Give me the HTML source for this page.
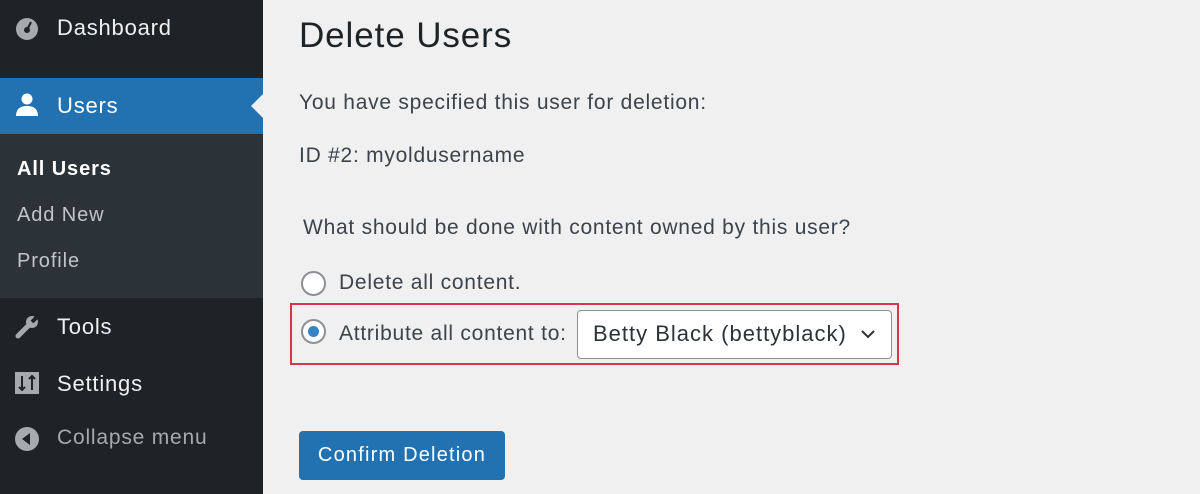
<!DOCTYPE html>
<html><head><style>
*{margin:0;padding:0;box-sizing:border-box}
body{width:1200px;height:494px;background:#f0f0f1;font-family:"Liberation Sans",Arial,sans-serif;position:relative;overflow:hidden;color:#3c434a}
.sb{position:absolute;left:0;top:0;width:263px;height:494px;background:#1d2327}
.it{position:absolute;left:57px;font-size:22px;color:#f0f0f1;letter-spacing:0.8px}
.ic{position:absolute;left:14px}
.sub{position:absolute;left:0;top:134px;width:263px;height:164px;background:#2c3338}
.s{position:absolute;left:17px;font-size:20px;color:#c3c4c7;letter-spacing:0.9px}
.t{position:absolute;font-size:21px;color:#3c434a;white-space:nowrap;letter-spacing:0.75px}
.radio{position:absolute;left:301px;width:25px;height:25px;border-radius:50%;border:2px solid #8c8f94;background:#fff}
</style></head><body>
<div class="sb">
  <svg class="ic" style="top:16px" width="26" height="24" viewBox="0 0 26 24"><circle cx="13" cy="13" r="11" fill="#a7aaad"/><circle cx="13" cy="14" r="3" fill="#1d2327"/><path d="M13 14 L17 6" stroke="#1d2327" stroke-width="2"/></svg>
  <div class="it" style="top:15px">Dashboard</div>
  <div style="position:absolute;top:78px;left:0;width:263px;height:56px;background:#2271b1"></div>
  <svg style="position:absolute;left:250px;top:94px" width="13" height="24"><path d="M13 0 L1 12 L13 24Z" fill="#f0f0f1"/></svg>
  <svg class="ic" style="top:92px" width="26" height="26" viewBox="0 0 26 26"><circle cx="13" cy="7" r="5.5" fill="#fff"/><path d="M2 24 Q2 14 13 14 Q24 14 24 24Z" fill="#fff"/></svg>
  <div class="it" style="top:93px;color:#fff">Users</div>
  <div class="sub">
    <div class="s" style="top:24px;color:#fff;font-weight:bold">All Users</div>
    <div class="s" style="top:70px">Add New</div>
    <div class="s" style="top:116px">Profile</div>
  </div>
  <svg class="ic" style="top:314px" width="26" height="26" viewBox="0 0 26 26"><path d="M4 22 L15 11" stroke="#a7aaad" stroke-width="5" stroke-linecap="round"/><circle cx="18" cy="8" r="6" fill="#a7aaad"/><path d="M18 8 L24 2" stroke="#1d2327" stroke-width="4"/></svg>
  <div class="it" style="top:314px">Tools</div>
  <svg class="ic" style="top:371px" width="26" height="24" viewBox="0 0 26 24"><rect x="1" y="1" width="24" height="22" fill="#a7aaad"/><path d="M8 5 V19 M5 16 L8 19 L11 16 M18 19 V5 M15 8 L18 5 L21 8" stroke="#1d2327" stroke-width="2" fill="none"/></svg>
  <div class="it" style="top:371px">Settings</div>
  <svg class="ic" style="top:426px" width="26" height="26" viewBox="0 0 26 26"><circle cx="13" cy="13" r="12" fill="#a7aaad"/><path d="M16 7 L8 13 L16 19Z" fill="#1d2327"/></svg>
  <div class="it" style="top:426px;color:#a7aaad;font-size:21px">Collapse menu</div>
</div>
<div style="position:absolute;left:299px;top:16px;font-size:35px;color:#1d2327;letter-spacing:0.9px">Delete Users</div>
<div class="t" style="left:299px;top:91px">You have specified this user for deletion:</div>
<div class="t" style="left:299px;top:144px">ID #2: myoldusername</div>
<div class="t" style="left:303px;top:216px">What should be done with content owned by this user?</div>
<div class="radio" style="top:271px"></div>
<div class="t" style="left:339px;top:271px">Delete all content.</div>
<div style="position:absolute;left:290px;top:303px;width:609px;height:62px;border:2px solid #d63649"></div>
<div class="radio" style="top:319px"><div style="position:absolute;left:5px;top:5px;width:11px;height:11px;border-radius:50%;background:#3582c4"></div></div>
<div class="t" style="left:339px;top:322px">Attribute all content to:</div>
<div style="position:absolute;left:577px;top:310px;width:315px;height:49px;background:#fff;border:1.5px solid #8c8f94;border-radius:4px"></div>
<div class="t" style="left:593px;top:321px;font-size:22px;color:#2c3338;letter-spacing:1px">Betty Black (bettyblack)</div>
<svg style="position:absolute;left:860px;top:328px" width="16" height="12"><path d="M2 3 L8 9 L14 3" stroke="#2c3338" stroke-width="2" fill="none"/></svg>
<div style="position:absolute;left:299px;top:431px;width:206px;height:49px;background:#2271b1;border-radius:4px;color:#fff;font-size:20px;text-align:center;line-height:49px;letter-spacing:1.2px">Confirm Deletion</div>
</body></html>
